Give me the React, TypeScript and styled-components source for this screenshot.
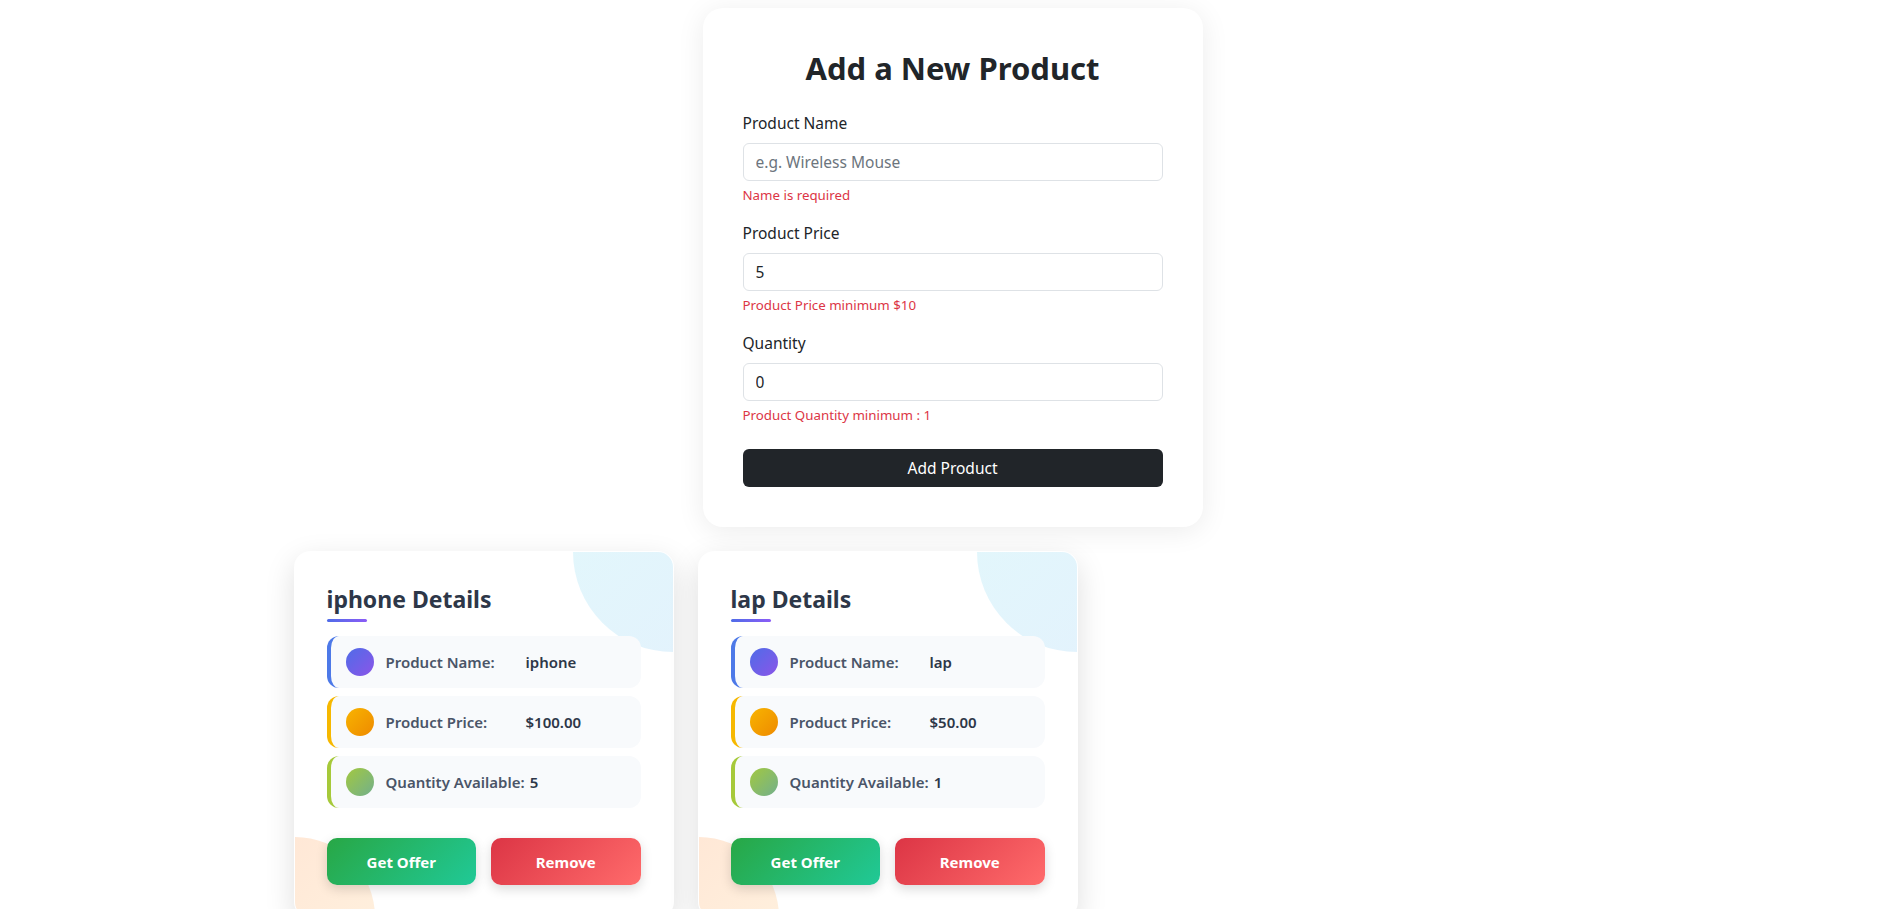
import styled, { createGlobalStyle } from "styled-components";

const GlobalStyle = createGlobalStyle`
  html {
    scrollbar-width: none;
  }
  body {
    margin: 0;
    background: #ffffff;
    font-family: "Noto Sans", "Open Sans", "Liberation Sans", sans-serif;
    color: #212529;
  }
  * {
    box-sizing: border-box;
  }
`;

const Page = styled.div`
  padding-top: 8px;
`;

const FormCard = styled.form`
  width: 500px;
  margin: 0 auto;
  padding: 40px;
  background: #ffffff;
  border-radius: 20px;
  box-shadow: 0 4px 28px rgba(0, 0, 0, 0.08);
  transform: translateX(1px);
`;

const FormTitle = styled.h2`
  margin: 0 0 25px;
  padding-top: 1px;
  height: 38px;
  font-size: 31px;
  font-weight: 700;
  line-height: 38px;
  text-align: center;
  color: #212529;
`;

const Field = styled.div`
  margin-bottom: 16px;
`;

const Label = styled.label`
  display: block;
  margin-bottom: 8px;
  font-size: 15.5px;
  line-height: 24px;
`;

const Input = styled.input`
  display: block;
  width: 100%;
  height: 38px;
  padding: 6px 12px;
  font: inherit;
  font-size: 15.5px;
  color: #212529;
  border: 1px solid #dee2e6;
  border-radius: 6px;
  outline: none;
  &::placeholder {
    color: #6c757d;
  }
`;

const Error = styled.div`
  margin-top: 4px;
  font-size: 13.3px;
  line-height: 20px;
  color: #dc3545;
`;

const SubmitBtn = styled.button`
  display: block;
  width: 100%;
  height: 38px;
  margin-top: 24px;
  border: none;
  border-radius: 6px;
  background: #212529;
  color: #ffffff;
  font: inherit;
  font-size: 15.5px;
  cursor: pointer;
`;

const CardList = styled.div`
  display: flex;
  gap: 24px;
  width: 1320px;
  margin: 24px auto 0;
  padding-left: 2px;
`;

const Card = styled.div`
  position: relative;
  overflow: hidden;
  width: 380px;
  padding: 32px;
  background: #ffffff;
  border: 1px solid rgba(255, 255, 255, 0.9);
  border-radius: 16px;
  box-shadow: 0 10px 30px rgba(0, 0, 0, 0.13);

  &::before {
    content: "";
    position: absolute;
    top: -100px;
    right: -100px;
    width: 200px;
    height: 200px;
    border-radius: 50%;
    background: linear-gradient(135deg, #e2f8fb, #e3f1fd);
  }

  &::after {
    content: "";
    position: absolute;
    bottom: -80px;
    left: -80px;
    width: 160px;
    height: 160px;
    border-radius: 50%;
    background: linear-gradient(135deg, #ffe4d3, #fff3e0);
  }
`;

const CardBody = styled.div`
  position: relative;
  z-index: 1;
`;

const CardTitle = styled.h3`
  position: relative;
  display: inline-block;
  margin: 0 0 14px;
  padding-bottom: 7px;
  font-size: 23px;
  font-weight: 700;
  line-height: 31px;
  color: #2d3748;

  &::after {
    content: "";
    position: absolute;
    left: 0;
    bottom: 0;
    width: 40px;
    height: 3px;
    border-radius: 2px;
    background: linear-gradient(90deg, #4f6ce8, #8b5cf6);
  }
`;

const Rows = styled.div`
  display: flex;
  flex-direction: column;
  gap: 8px;
  margin-bottom: 30px;
`;

const Row = styled.div<{ $accent: string }>`
  display: flex;
  align-items: center;
  gap: 12px;
  height: 52px;
  padding: 0 15px;
  background: #f8fafc;
  border-radius: 12px;
  border-left: 4px solid ${(p) => p.$accent};
`;

const Dot = styled.span<{ $from: string; $to: string }>`
  flex: none;
  width: 28px;
  height: 28px;
  border-radius: 50%;
  background: linear-gradient(135deg, ${(p) => p.$from}, ${(p) => p.$to});
`;

const RowText = styled.div`
  display: flex;
  align-items: baseline;
  gap: 5px;
  font-size: 15px;
  font-weight: 600;
  white-space: nowrap;
`;

const RowLabel = styled.span`
  min-width: 135px;
  color: #4a5568;
`;

const RowValue = styled.span`
  color: #2d3748;
`;

const Actions = styled.div`
  display: flex;
  gap: 15px;
`;

const ActionBtn = styled.button<{ $from: string; $to: string }>`
  flex: 1;
  height: 47px;
  border: none;
  border-radius: 10px;
  background: linear-gradient(135deg, ${(p) => p.$from}, ${(p) => p.$to});
  color: #ffffff;
  font: inherit;
  font-size: 15px;
  font-weight: 700;
  box-shadow: 0 4px 12px rgba(0, 0, 0, 0.15);
  cursor: pointer;
`;

interface Product {
  name: string;
  price: number;
  quantity: number;
}

const products: Product[] = [
  { name: "iphone", price: 100, quantity: 5 },
  { name: "lap", price: 50, quantity: 1 },
];

function ProductCard({ product }: { product: Product }) {
  return (
    <Card>
      <CardBody>
        <CardTitle>{product.name} Details</CardTitle>
        <Rows>
          <Row $accent="#4d79e8">
            <Dot $from="#4f6ce8" $to="#8b55e8" />
            <RowText>
              <RowLabel>Product Name:</RowLabel>
              <RowValue>{product.name}</RowValue>
            </RowText>
          </Row>
          <Row $accent="#f6b800">
            <Dot $from="#f8b400" $to="#ee8a00" />
            <RowText>
              <RowLabel>Product Price:</RowLabel>
              <RowValue>${product.price.toFixed(2)}</RowValue>
            </RowText>
          </Row>
          <Row $accent="#a6c93a">
            <Dot $from="#a2c840" $to="#72b08c" />
            <RowText>
              <RowLabel>Quantity Available:</RowLabel>
              <RowValue>{product.quantity}</RowValue>
            </RowText>
          </Row>
        </Rows>
        <Actions>
          <ActionBtn $from="#28a745" $to="#20c997">Get Offer</ActionBtn>
          <ActionBtn $from="#dc3545" $to="#ff6b6b">Remove</ActionBtn>
        </Actions>
      </CardBody>
    </Card>
  );
}

export default function App() {
  return (
    <Page>
      <GlobalStyle />
      <FormCard onSubmit={(e) => e.preventDefault()}>
        <FormTitle>Add a New Product</FormTitle>
        <Field>
          <Label>Product Name</Label>
          <Input type="text" placeholder="e.g. Wireless Mouse" />
          <Error>Name is required</Error>
        </Field>
        <Field>
          <Label>Product Price</Label>
          <Input type="number" defaultValue={5} />
          <Error>Product Price minimum $10</Error>
        </Field>
        <Field>
          <Label>Quantity</Label>
          <Input type="number" defaultValue={0} />
          <Error>Product Quantity minimum : 1</Error>
        </Field>
        <SubmitBtn type="submit">Add Product</SubmitBtn>
      </FormCard>
      <CardList>
        {products.map((p) => (
          <ProductCard key={p.name} product={p} />
        ))}
      </CardList>
    </Page>
  );
}
